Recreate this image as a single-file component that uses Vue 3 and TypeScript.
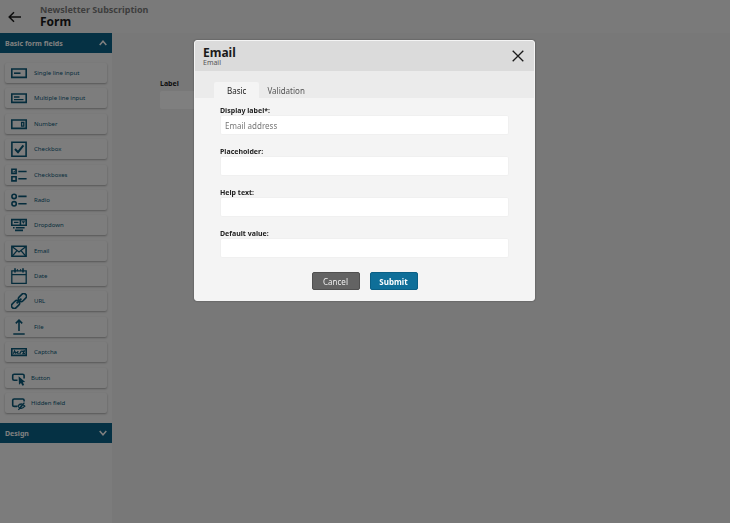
<script setup lang="ts">
import { reactive, ref } from 'vue'

interface FieldType {
  id: string
  label: string
  compact?: boolean
}

interface Property {
  id: string
  label: string
}

const fieldTypes: FieldType[] = [
  { id: 'single', label: 'Single line input' },
  { id: 'multi', label: 'Multiple line input' },
  { id: 'number', label: 'Number' },
  { id: 'checkbox', label: 'Checkbox' },
  { id: 'checkboxes', label: 'Checkboxes' },
  { id: 'radio', label: 'Radio' },
  { id: 'dropdown', label: 'Dropdown' },
  { id: 'email', label: 'Email' },
  { id: 'date', label: 'Date' },
  { id: 'url', label: 'URL' },
  { id: 'file', label: 'File' },
  { id: 'captcha', label: 'Captcha' },
  { id: 'button', label: 'Button', compact: true },
  { id: 'hidden', label: 'Hidden field', compact: true },
]

const properties: Property[] = [
  { id: 'display', label: 'Display label*:' },
  { id: 'placeholder', label: 'Placeholder:' },
  { id: 'help', label: 'Help text:' },
  { id: 'default', label: 'Default value:' },
]

const values = reactive<Record<string, string>>({
  display: 'Email address',
  placeholder: '',
  help: '',
  default: '',
})

const tabs = ['Basic', 'Validation']
const activeTab = ref('Basic')
const canvasValue = ref('')
</script>

<template>
  <div class="page">
    <header class="topbar">
      <button class="back" type="button" aria-label="Back">
        <svg viewBox="0 0 14 12" width="14" height="12">
          <path d="M13 6H1.5M6 1.2L1.2 6L6 10.8" />
        </svg>
      </button>
      <div class="titles">
        <p class="parent">Newsletter Subscription</p>
        <h1>Form</h1>
      </div>
    </header>

    <div class="workspace">
      <aside class="sidebar">
        <button class="section" type="button">
          <span>Basic form fields</span>
          <svg viewBox="0 0 8 6" width="8" height="6"><path d="M.7 5L4 1.2L7.3 5" /></svg>
        </button>
        <ul class="palette">
          <li v-for="field in fieldTypes" :key="field.id">
            <button class="tile" :class="{ compact: field.compact }" type="button">
              <svg class="glyph" viewBox="0 0 16 16" width="16" height="16">
                <g v-if="field.id === 'single'">
                  <path d="M.8 4H15.2V12.4H.8Z" />
                  <path d="M3 8.2H9.5" />
                </g>
                <g v-else-if="field.id === 'multi'">
                  <path d="M.8 4H15.2V12.4H.8Z" />
                  <path class="mid" d="M3 7H8.5M3 9.6H12.5" />
                </g>
                <g v-else-if="field.id === 'number'">
                  <path d="M.8 4H15.2V12.4H.8Z" />
                  <path class="mid" d="M10.6 6.3H12.8V10.2H10.6Z" />
                </g>
                <g v-else-if="field.id === 'checkbox'">
                  <path d="M.9 1.2H15.1V15.2H.9Z" />
                  <path class="bold" d="M4 8L7 11.2L12.4 4.4" />
                </g>
                <g v-else-if="field.id === 'checkboxes'">
                  <path d="M.9 2.3H5.1V6.5H.9ZM.9 9.7H5.1V13.9H.9ZM7.3 4.5H15.6M7.3 11.7H15.6" />
                  <path class="thin" d="M2 4.4L3 5.4L4.4 3.4" />
                </g>
                <g v-else-if="field.id === 'radio'">
                  <circle cx="3.1" cy="4.4" r="2.2" />
                  <circle cx="3.1" cy="11.8" r="2.2" />
                  <path d="M7.3 4.4H15.6M7.3 11.8H15.6" />
                </g>
                <g v-else-if="field.id === 'dropdown'">
                  <path d="M.8 2.6H15.2V8.2H.8ZM9.4 2.6V8.2" />
                  <path class="fill" d="M10.6 4.2H14.2L12.4 6.8Z" />
                  <path class="mid" d="M3 5.4H7.5" />
                  <path d="M2 10.8H3.6M4.8 10.8H13.6M4 13.4H12" />
                </g>
                <g v-else-if="field.id === 'email'">
                  <path d="M.9 3.2H15.1V13.2H.9Z" />
                  <path class="mid" d="M1 3.4L8 9L15 3.4M1.2 13.2L6 7.6M14.8 13.2L10 7.6" />
                </g>
                <g v-else-if="field.id === 'date'">
                  <path class="mid" d="M.8 2.8H15.2V15.3H.8ZM.8 6.6H15.2" />
                  <path d="M4 .3V4.6M12 .3V4.6" />
                  <path class="thin" d="M6.4 1V3.2M9.6 1V3.2" />
                </g>
                <g v-else-if="field.id === 'url'" transform="rotate(-45 8 8)">
                  <rect x="-1.4" y="5.3" width="9" height="5.4" rx="2.7" />
                  <rect x="8.4" y="5.3" width="9" height="5.4" rx="2.7" />
                  <path d="M4.6 8H11.4" />
                </g>
                <g v-else-if="field.id === 'file'">
                  <path d="M8 12V1.2M4.8 4.4L8 1.2L11.2 4.4M2.3 15H13.7" />
                </g>
                <g v-else-if="field.id === 'captcha'">
                  <path d="M.8 4.8H15.2V11.4H.8Z" />
                  <path class="mid" d="M2.4 9.8L3.6 7L5 9.6M7.4 7.2L5.9 8.4L7.6 9.7M8.6 9.8L10.6 6.6M11 7.4L13.4 6.9L12 9.7H14" />
                </g>
                <g v-else-if="field.id === 'button'">
                  <path d="M6.5 10.2H3.2Q1.7 10.2 1.7 8.8V5.6Q1.7 4.2 3.2 4.2H11.6Q13.1 4.2 13.1 5.6V8.4" />
                  <path class="fill" d="M7.6 6.2L14.2 12L11.8 12.3L13.2 15L11.4 15.8L10 13.1L8 14.7Z" />
                </g>
                <g v-else>
                  <path d="M6 11.4H3.2Q1.7 11.4 1.7 10.2V5.2Q1.7 4 3.2 4H11.8Q13.1 4 13.1 5.4V6.6" />
                  <path class="mid" d="M6.8 11.2Q10.2 6.8 13.8 11.2Q10.2 15.6 6.8 11.2ZM7.4 14.8L13.4 7.6" />
                  <circle class="fill" cx="10.3" cy="11.2" r="1" />
                </g>
              </svg>
              <span>{{ field.label }}</span>
            </button>
          </li>
        </ul>
        <button class="section" type="button">
          <span>Design</span>
          <svg viewBox="0 0 8 6" width="8" height="6"><path d="M.7 1L4 4.8L7.3 1" /></svg>
        </button>
      </aside>

      <main class="canvas">
        <label for="canvas-field">Label</label>
        <input id="canvas-field" v-model="canvasValue" type="text" />
      </main>
    </div>

    <div class="overlay">
      <form class="dialog" role="dialog" aria-labelledby="dialog-title" @submit.prevent>
        <div class="dialog-head">
          <div>
            <h2 id="dialog-title">Email</h2>
            <p>Email</p>
          </div>
          <button class="close" type="button" aria-label="Close">
            <svg viewBox="0 0 12 12" width="12" height="12"><path d="M.7 .7L11.3 11.3M11.3 .7L.7 11.3" /></svg>
          </button>
        </div>
        <div class="tabs" role="tablist">
          <button
            v-for="tab in tabs"
            :key="tab"
            type="button"
            role="tab"
            :aria-selected="tab === activeTab"
            :class="{ active: tab === activeTab }"
            @click="activeTab = tab"
          >
            {{ tab }}
          </button>
        </div>
        <div class="fields">
          <div v-for="prop in properties" :key="prop.id" class="field">
            <label :for="prop.id">{{ prop.label }}</label>
            <input :id="prop.id" v-model="values[prop.id]" type="text" />
          </div>
        </div>
        <div class="actions">
          <button class="cancel" type="button">Cancel</button>
          <button class="submit" type="submit">Submit</button>
        </div>
      </form>
    </div>
  </div>
</template>

<style>
body {
  margin: 0;
}
</style>

<style scoped>
* {
  box-sizing: border-box;
}

.page {
  display: flex;
  flex-direction: column;
  min-height: 100vh;
  background: #f0f0f0;
  color: #1a1a1a;
  font-family: "Noto Sans", "Open Sans", sans-serif;
}

button {
  margin: 0;
  padding: 0;
  border: 0;
  background: none;
  color: inherit;
  font: inherit;
}

svg {
  display: block;
  flex: none;
  fill: none;
  stroke: currentColor;
}

h1,
h2,
p,
ul {
  margin: 0;
  padding: 0;
}

.topbar {
  display: flex;
  align-items: center;
  gap: 18px;
  height: 33px;
  padding: 0 8px;
  background: #f5f5f5;
}

.back svg {
  stroke-width: 1.5;
}

.titles {
  padding-bottom: 1px;
}

.parent {
  color: #7c7c7c;
  font-size: 9px;
  font-weight: 700;
  line-height: 11px;
}

h1 {
  font-size: 12px;
  line-height: 14px;
}

.workspace {
  display: flex;
  flex: 1;
}

.sidebar {
  width: 112px;
  background: #f8f8f8;
}

.section {
  display: flex;
  align-items: center;
  justify-content: space-between;
  width: 100%;
  height: 20px;
  padding: 0 5px;
  background: #0a6388;
  color: #fff;
  font-size: 7px;
  font-weight: 700;
}

.section svg {
  stroke-width: 1.5;
}

.palette {
  display: flex;
  flex-direction: column;
  justify-content: space-between;
  min-height: 370px;
  padding: 10px 5px;
  list-style: none;
}

.tile {
  display: flex;
  align-items: center;
  gap: 7px;
  width: 100%;
  height: 20px;
  padding: 0 6px;
  border-radius: 2px;
  background: #fbfbfb;
  box-shadow: 0 1px 2px rgba(0, 0, 0, 0.3);
  color: #0a5878;
  font-size: 6px;
}

.tile.compact {
  gap: 4px;
}

.glyph {
  stroke-width: 1.6;
}

.glyph .thin {
  stroke-width: 0.9;
}

.glyph .mid {
  stroke-width: 1.3;
}

.glyph .bold {
  stroke-width: 2;
}

.glyph .fill {
  fill: currentColor;
  stroke: none;
}

.canvas {
  display: flex;
  flex: 1;
  flex-direction: column;
  align-items: flex-start;
  gap: 2px;
  padding: 46px 48px;
}

.canvas label {
  font-size: 7px;
  font-weight: 700;
  line-height: 10px;
}

.canvas input {
  width: 100%;
  max-width: 320px;
  height: 18px;
  border: 0;
  border-radius: 2px;
  background: #fff;
}

.overlay {
  position: fixed;
  inset: 0;
  display: flex;
  align-items: flex-start;
  justify-content: center;
  padding: 40px 1px 0 0;
  background: rgba(0, 0, 0, 0.5);
}

.dialog {
  width: 341px;
  overflow: hidden;
  border: 1px solid #f4f4f4;
  border-radius: 3px;
  background: #f4f4f4;
  box-shadow: 0 0 2px rgba(0, 0, 0, 0.4);
}

.dialog-head {
  display: flex;
  align-items: center;
  justify-content: space-between;
  height: 30px;
  padding: 0 10px 0 8px;
  background: #dbdbdb;
}

h2 {
  font-size: 12px;
  line-height: 13px;
}

.dialog-head p {
  color: #555;
  font-size: 7px;
  line-height: 8px;
}

.close svg {
  stroke-width: 1.3;
}

.tabs {
  display: flex;
  align-items: flex-end;
  height: 27px;
  padding: 0 19px;
  background: #ebebeb;
}

.tabs button {
  height: 16px;
  padding: 0 8px;
  color: #555;
  font-size: 8px;
}

.tabs .active {
  padding: 0 13px;
  border-radius: 2px 2px 0 0;
  background: #f4f4f4;
  color: #222;
}

.fields {
  display: flex;
  flex-direction: column;
  gap: 12px;
  padding: 8px 25px 0;
}

.field {
  display: flex;
  flex-direction: column;
}

.field label {
  color: #222;
  font-size: 7px;
  font-weight: 700;
  line-height: 9px;
}

.field input {
  width: 100%;
  height: 20px;
  padding: 0 4px;
  border: 1px solid #f0f0f0;
  border-radius: 2px;
  background: #fff;
  color: #777;
  font-family: inherit;
  font-size: 8px;
}

.actions {
  display: flex;
  justify-content: center;
  gap: 10px;
  padding: 14px 0 10px;
}

.actions button {
  width: 48px;
  height: 18px;
  border: 1px solid #505050;
  border-radius: 2px;
  background: #636363;
  color: #eee;
  font-size: 8px;
}

.actions .submit {
  border-color: #0a5f85;
  background: #0f6f99;
  color: #fff;
  font-weight: 700;
}
</style>
